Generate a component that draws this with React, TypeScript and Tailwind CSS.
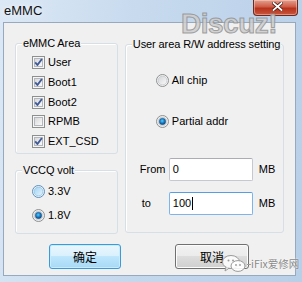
import React from 'react';

const ui = { fontFamily: '"Liberation Sans", Arial, sans-serif' };
const cjk = { fontFamily: '"Noto Sans CJK SC", "Liberation Sans", sans-serif' };

function CheckBox({ checked }: { checked: boolean }) {
  return (
    <svg width="13" height="13" viewBox="0 0 13 13" className="shrink-0">
      <defs>
        <linearGradient id="cbfill" x1="0" y1="0" x2="1" y2="1">
          <stop offset="0" stopColor="#d6d6d6" />
          <stop offset="1" stopColor="#fcfcfc" />
        </linearGradient>
      </defs>
      <rect x="0.5" y="0.5" width="12" height="12" fill="#f6f6f6" stroke="#8e8f8f" />
      <rect x="2.5" y="2.5" width="8" height="8" fill="url(#cbfill)" stroke="#b4b8bd" />
      {checked && (
        <path d="M3.2 6.4 L5.4 9 L9.9 3" fill="none" stroke="#3f5a98" strokeWidth="1.9" strokeLinejoin="round" />
      )}
    </svg>
  );
}

function Radio({ checked, hover }: { checked: boolean; hover?: boolean }) {
  return (
    <svg width="13" height="13" viewBox="0 0 13 13" className="shrink-0">
      <defs>
        <radialGradient id="rdot" cx="0.45" cy="0.4" r="0.6">
          <stop offset="0" stopColor="#4fd0ff" />
          <stop offset="0.55" stopColor="#1a7cc4" />
          <stop offset="1" stopColor="#0b3d74" />
        </radialGradient>
        <linearGradient id="rin" x1="0" y1="0" x2="1" y2="1">
          <stop offset="0" stopColor="#d2d4d6" />
          <stop offset="1" stopColor="#fbfbfb" />
        </linearGradient>
        <linearGradient id="rinh" x1="0" y1="0" x2="1" y2="1">
          <stop offset="0" stopColor="#9fd3f3" />
          <stop offset="1" stopColor="#e6f5fd" />
        </linearGradient>
      </defs>
      <circle cx="6.5" cy="6.5" r="6" fill="#f4f4f4" stroke={hover ? '#5b8fbf' : '#8e8f8f'} />
      <circle cx="6.5" cy="6.5" r="4.4" fill={hover ? 'url(#rinh)' : 'url(#rin)'} stroke={hover ? '#8cc3e6' : '#c4c8cc'} strokeWidth="0.8" />
      {checked && <circle cx="6.5" cy="6.5" r="3.2" fill="url(#rdot)" stroke="#2a5d8f" strokeWidth="0.5" />}
    </svg>
  );
}

function Group({ label, className, children }: { label: string; className: string; children: React.ReactNode }) {
  return (
    <div className={`relative rounded-[3px] border border-[#d5dfe5] shadow-[inset_1px_1px_0_#ffffff] ${className}`}>
      <span className="absolute -top-[8px] left-[6px] whitespace-nowrap bg-[#f0f0f0] px-[1px] text-[11px] leading-[14px] tracking-[-0.1px]">
        {label}
      </span>
      {children}
    </div>
  );
}

export default function App() {
  const areas = [
    { name: 'User', on: true },
    { name: 'Boot1', on: true },
    { name: 'Boot2', on: true },
    { name: 'RPMB', on: false },
    { name: 'EXT_CSD', on: true },
  ];

  return (
    <div className="relative w-[302px] h-[282px] overflow-hidden bg-[linear-gradient(100deg,#dce8f5_0%,#c7daee_40%,#b8cfe8_100%)] text-black" style={ui}>
      {/* Title bar */}
      <div className="flex h-[22px] items-start justify-between">
        <span className="pl-[4px] pt-[3px] text-[13px] leading-[16px] text-[#111] [text-shadow:0_0_6px_#ffffff]">eMMC</span>
        <div className="mr-[4px] flex h-[16px] w-[45px] items-center justify-center rounded-b-[4px] border border-t-0 border-[#6e2a20] bg-[linear-gradient(#e4a08f,#cf5c47_45%,#b8321b_55%,#c9573f)] shadow-[inset_0_0_0_1px_rgba(255,220,210,0.45)]">
          <svg width="11" height="9" viewBox="0 0 11 9" className="ml-[3px] -mt-[2px]">
            <path d="M1.5 1 L9.5 8 M9.5 1 L1.5 8" stroke="#4a1a12" strokeWidth="3.4" strokeLinecap="square" />
            <path d="M1.5 1 L9.5 8 M9.5 1 L1.5 8" stroke="#ffffff" strokeWidth="1.8" strokeLinecap="square" />
          </svg>
        </div>
      </div>

      {/* Client area */}
      <div className="ml-[3px] h-[254px] w-[293px] border border-[#97a9bf] bg-[#f0f0f0] px-[11px] pt-[20px] text-[11px] leading-[13px]">
        <div className="flex items-start gap-[7px]">
          <div className="flex w-[104px] flex-col gap-[16px]">
            <Group label="eMMC Area" className="h-[111px] pl-[16px] pt-[9px]">
              {areas.map((a) => (
                <div key={a.name} className="flex h-[19.7px] items-center gap-[3px]">
                  <CheckBox checked={a.on} />
                  <span>{a.name}</span>
                </div>
              ))}
            </Group>
            <Group label="VCCQ volt" className="h-[64px] pl-[16px] pt-[8px]">
              <div className="flex h-[24px] items-center gap-[3px]">
                <Radio checked={false} hover />
                <span>3.3V</span>
              </div>
              <div className="flex h-[24px] items-center gap-[3px]">
                <Radio checked />
                <span>1.8V</span>
              </div>
            </Group>
          </div>

          <Group label="User area R/W address setting" className="mt-[1px] h-[189px] w-[161px] pt-[25px]">
            <div className="flex h-[20px] items-center gap-[3px] pl-[30px]">
              <Radio checked={false} />
              <span>All chip</span>
            </div>
            <div className="mt-[21px] flex h-[20px] items-center gap-[3px] pl-[30px]">
              <Radio checked />
              <span>Partial addr</span>
            </div>

            <div className="mt-[27px] flex h-[23px] items-center pl-[14px]">
              <span className="w-[29px]">From</span>
              <div className="flex h-[23px] w-[84px] items-center rounded-[2px] border border-[#c5c8d0] border-t-[#abadb3] bg-white pl-[3px]">
                0
              </div>
              <span className="ml-[6px]">MB</span>
            </div>
            <div className="mt-[11px] flex h-[23px] items-center pl-[14px]">
              <span className="w-[29px] pl-[2px]">to</span>
              <div className="flex h-[23px] w-[84px] items-center rounded-[2px] border border-[#7eb4ea] border-t-[#569de5] bg-white pl-[3px]">
                100
                <span className="ml-[1px] inline-block h-[13px] w-[1px] bg-black" />
              </div>
              <span className="ml-[6px]">MB</span>
            </div>
          </Group>
        </div>

        {/* Buttons */}
        <div className="mt-[10px] flex pl-[34px]">
          <div
            className="flex h-[25px] w-[72px] items-center justify-center rounded-[3px] border border-[#3c9ad6] bg-[linear-gradient(#eaf6fd,#d9f0fc_50%,#bee6fd_50%,#a7d9f5)] shadow-[inset_0_0_0_1px_#c6ecff] text-[12px]"
            style={cjk}
          >
            确定
          </div>
          <div
            className="ml-[54px] flex h-[25px] w-[74px] items-center justify-center rounded-[3px] border border-[#707070] bg-[linear-gradient(#f2f2f2,#ebebeb_50%,#dddddd_50%,#cfcfcf)] shadow-[inset_0_0_0_1px_#fcfcfc] text-[12px]"
            style={cjk}
          >
            取消
          </div>
        </div>
      </div>

      {/* Watermarks */}
      <span className="pointer-events-none absolute left-[181px] top-[7px] text-[28px] font-bold leading-[34px] tracking-[-0.5px] text-[rgba(205,205,205,0.85)] [-webkit-text-stroke:1px_rgba(140,140,140,0.8)]">
        Discuz!
      </span>
      <div className="pointer-events-none absolute left-[221px] top-[254px] flex items-center">
        <svg width="26" height="20" viewBox="0 0 26 20">
          <ellipse cx="10" cy="8" rx="8.5" ry="6.5" fill="rgba(255,255,255,0.85)" stroke="#9a9a9a" strokeWidth="1" />
          <path d="M5 13 L4 17 L8 14.2" fill="rgba(255,255,255,0.85)" stroke="#9a9a9a" strokeWidth="1" />
          <ellipse cx="17" cy="12" rx="7" ry="5.4" fill="rgba(255,255,255,0.9)" stroke="#9a9a9a" strokeWidth="1" />
          <circle cx="7.5" cy="6.5" r="1" fill="#9a9a9a" />
          <circle cx="12" cy="6.5" r="1" fill="#9a9a9a" />
          <circle cx="15" cy="11" r="0.9" fill="#9a9a9a" />
          <circle cx="19" cy="11" r="0.9" fill="#9a9a9a" />
        </svg>
        <span className="h-[1px] w-[4px] bg-[#9a9a9a]" />
        <span className="text-[10.5px] leading-[14px] text-[#8a8a8a] [text-shadow:0_0_2px_#ffffff]" style={cjk}>
          iFix爱修网
        </span>
      </div>
    </div>
  );
}
